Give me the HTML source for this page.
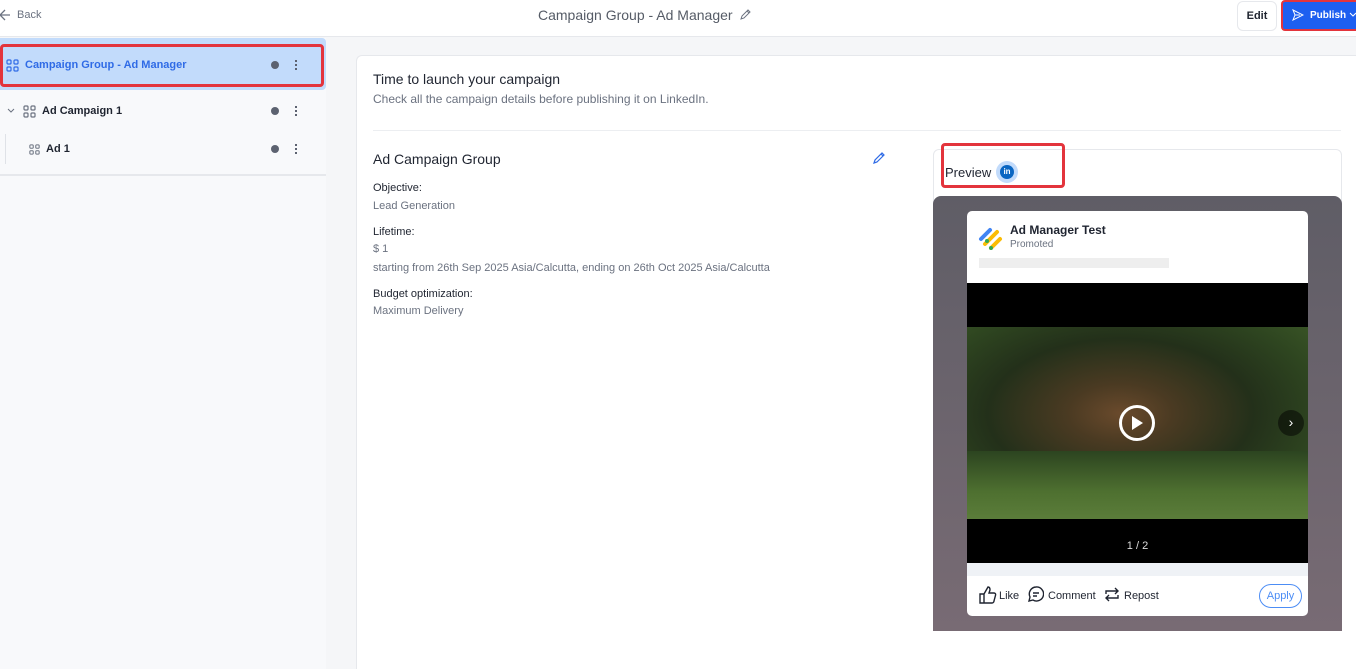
<!DOCTYPE html>
<html><head><meta charset="utf-8"><style>
*{box-sizing:border-box;margin:0;padding:0}
body{width:1356px;height:669px;overflow:hidden;font-family:"Liberation Sans",sans-serif;background:#f5f6f8;position:relative;color:#1f2430}
.a{position:absolute}
.hdr{left:0;top:0;width:1356px;height:37px;background:#fff;border-bottom:1px solid #e6e8ec}
.side{left:0;top:38px;width:326px;height:631px;background:#f8f9fb}
.row{position:absolute;left:0;width:326px;height:38px;font-size:11px;font-weight:bold;display:flex;align-items:center}
.dot{position:absolute;left:271px;width:8px;height:8px;border-radius:50%;background:#5c6270}
.kb{position:absolute;left:295px;width:2px;height:2px;background:#5c6270;box-shadow:0 -4px #5c6270,0 4px #5c6270}
.card{left:356px;top:55px;width:1000px;height:614px;background:#fff;border-left:1px solid #e6e8ec;border-top:1px solid #e6e8ec;border-radius:6px 0 0 0}
.lbl{font-size:11px;color:#1f2430}
.val{font-size:11px;color:#6b7280}
</style></head><body>
<div class="a hdr"></div>
<svg class="a" style="left:0;top:8px" width="12" height="14" viewBox="0 0 12 14"><path d="M10 7H1M5 2L0 7l5 5" stroke="#6b7280" stroke-width="1.3" fill="none"/></svg>
<div class="a" style="left:17px;top:9px;font-size:11px;color:#6b7280">Back</div>
<div class="a" style="left:538px;top:7px;font-size:14px;color:#555b66">Campaign Group - Ad Manager</div>
<svg class="a" style="left:739px;top:9px" width="12" height="12" viewBox="0 0 12 12"><path d="M2 10l1-3 6-6 2 2-6 6zM8 2l2 2" stroke="#6b7280" fill="none"/></svg>
<div class="a" style="left:1237px;top:1px;width:40px;height:30px;border:1px solid #e6e8ec;border-radius:6px;background:#fff;font-size:11px;text-align:center;line-height:28px;font-weight:bold;color:#1f2430">Edit</div>
<div class="a" style="left:1281px;top:0;width:80px;height:31px;background:#1d5ff0;border:2px solid #e3343c;border-radius:4px;color:#fff;font-size:10px;font-weight:bold;line-height:27px;padding-left:27px">Publish</div>
<svg class="a" style="left:1292px;top:9px" width="12" height="12" viewBox="0 0 12 12"><path d="M1 1l10 5-10 5 2-5zM3 6h5" stroke="#fff" fill="none"/></svg>
<svg class="a" style="left:1349px;top:12px" width="8" height="6"><path d="M1 1l3 3 3-3" stroke="#fff" fill="none"/></svg>
<div class="a side"></div>
<div class="a" style="left:0;top:38px;width:326px;height:52px;background:#c2dbfb;border-radius:0 4px 4px 0"></div>
<div class="a" style="left:0;top:44px;width:324px;height:43px;border:3px solid #e3343c;border-radius:4px"></div>
<div class="row" style="top:46px;color:#2f6be6">
<svg style="margin-left:6px" width="13" height="13" viewBox="0 0 13 13" fill="none" stroke="#2f6be6" stroke-width="1.2"><rect x="1" y="1" width="4" height="4" rx="1"/><rect x="8" y="1" width="4" height="4" rx="1"/><rect x="1" y="8" width="4" height="4" rx="1"/><rect x="8" y="8" width="4" height="4" rx="1"/></svg>
<span style="margin-left:6px">Campaign Group - Ad Manager</span><div class="dot"></div><div class="kb"></div></div>
<div class="row" style="top:92px;color:#1f2430">
<svg style="margin-left:7px" width="8" height="6"><path d="M1 1l3 3 3-3" stroke="#6b7280" fill="none"/></svg>
<svg style="margin-left:8px" width="13" height="13" viewBox="0 0 13 13" fill="none" stroke="#6b7280" stroke-width="1.2"><rect x="1" y="1" width="4" height="4" rx="1"/><rect x="8" y="1" width="4" height="4" rx="1"/><rect x="1" y="8" width="4" height="4" rx="1"/><rect x="8" y="8" width="4" height="4" rx="1"/></svg>
<span style="margin-left:6px">Ad Campaign 1</span><div class="dot"></div><div class="kb"></div></div>
<div class="a" style="left:5px;top:134px;width:1px;height:30px;background:#dfe2e7"></div>
<div class="row" style="top:130px">
<svg style="margin-left:29px" width="11" height="11" viewBox="0 0 13 13" fill="none" stroke="#6b7280" stroke-width="1.2"><rect x="1" y="1" width="4" height="4" rx="1"/><rect x="8" y="1" width="4" height="4" rx="1"/><rect x="1" y="8" width="4" height="4" rx="1"/><rect x="8" y="8" width="4" height="4" rx="1"/></svg>
<span style="margin-left:6px">Ad 1</span><div class="dot"></div><div class="kb"></div></div>
<div class="a" style="left:0;top:174px;width:326px;height:2px;background:#e6e8ec"></div>

<div class="a card"></div>
<div class="a" style="left:373px;top:71px;font-size:14px;color:#1f2430">Time to launch your campaign</div>
<div class="a" style="left:373px;top:92px;font-size:12px;color:#6b7280">Check all the campaign details before publishing it on LinkedIn.</div>
<div class="a" style="left:373px;top:130px;width:968px;height:1px;background:#eceef1"></div>
<div class="a" style="left:373px;top:151px;font-size:14px">Ad Campaign Group</div>
<svg class="a" style="left:872px;top:151px" width="14" height="14" viewBox="0 0 14 14"><path d="M2 12l1-3 7-7 2 2-7 7zM9 3l2 2" stroke="#2f6be6" stroke-width="1.2" fill="none"/></svg>
<div class="a lbl" style="left:373px;top:182px">Objective:</div>
<div class="a val" style="left:373px;top:200px">Lead Generation</div>
<div class="a lbl" style="left:373px;top:226px">Lifetime:</div>
<div class="a val" style="left:373px;top:243px">$ 1</div>
<div class="a val" style="left:373px;top:262px">starting from 26th Sep 2025 Asia/Calcutta, ending on 26th Oct 2025 Asia/Calcutta</div>
<div class="a lbl" style="left:373px;top:288px">Budget optimization:</div>
<div class="a val" style="left:373px;top:305px">Maximum Delivery</div>

<div class="a" style="left:933px;top:149px;width:409px;height:482px;border:1px solid #e6e8ec;border-radius:6px;background:#fff"></div>
<div class="a" style="left:941px;top:143px;width:124px;height:45px;border:3px solid #e3343c;border-radius:4px"></div>
<div class="a" style="left:945px;top:165px;font-size:13px">Preview</div>
<div class="a" style="left:996px;top:161px;width:22px;height:22px;border-radius:50%;background:#c2dbfb"></div>
<div class="a" style="left:1000px;top:165px;width:14px;height:14px;border-radius:50%;background:#0a66c2;color:#fff;font-size:8px;font-weight:bold;text-align:center;line-height:14px">in</div>
<div class="a" style="left:933px;top:196px;width:409px;height:435px;border-radius:8px 8px 0 0;background:linear-gradient(#5f5d66,#786b74)"></div>
<div class="a" style="left:967px;top:211px;width:341px;height:405px;background:#fff;border-radius:5px;overflow:hidden">
 <svg class="a" style="left:11px;top:13px" width="26" height="26" viewBox="0 0 26 26"><path d="M3 15l9-9" stroke="#4285f4" stroke-width="4" stroke-linecap="round"/><path d="M7 20l12-12" stroke="#fbbc04" stroke-width="4" stroke-linecap="round"/><path d="M13 24l9-9" stroke="#fbbc04" stroke-width="4" stroke-linecap="round"/><circle cx="9" cy="17" r="2" fill="#34a853"/><circle cx="13" cy="24" r="2" fill="#34a853"/></svg>
 <div class="a" style="left:43px;top:12px;font-size:12px;font-weight:bold;color:#1f2430">Ad Manager Test</div>
 <div class="a" style="left:43px;top:28px;font-size:10px;color:#6b7280">Promoted</div>
 <div class="a" style="left:12px;top:47px;width:190px;height:10px;background:#eee"></div>
 <div class="a" style="left:0;top:72px;width:341px;height:280px;background:#000"></div>
 <div class="a" style="left:0;top:116px;width:341px;height:192px;background:radial-gradient(ellipse at 45% 45%,#6a4a2c 0%,#4a3a22 20%,#23301a 50%,#2e4520 75%,#3d5a28 100%)"></div>
 <div class="a" style="left:0;top:240px;width:341px;height:68px;background:linear-gradient(#2c4420,#4e7030 60%,#5b7d3a)"></div>
 <div class="a" style="left:152px;top:194px;width:36px;height:36px;border:3px solid #fff;border-radius:50%"></div>
 <svg class="a" style="left:164px;top:204px" width="14" height="16"><path d="M1 1l11 7-11 7z" fill="#fff"/></svg>
 <div class="a" style="left:311px;top:199px;width:26px;height:26px;border-radius:50%;background:rgba(0,0,0,.5);color:#fff;font-size:14px;text-align:center;line-height:24px">›</div>
 <div class="a" style="left:0;top:329px;width:341px;text-align:center;color:#ddd;font-size:11px">1 / 2</div>
 <div class="a" style="left:0;top:352px;width:341px;height:13px;background:#eff2f6"></div>
 <svg class="a" style="left:12px;top:375px" width="18" height="18" viewBox="0 0 18 18" fill="none" stroke="#1f2430" stroke-width="1.4"><path d="M5 8v9H1V8zM5 8l4-7c2 0 2 2 2 3l-1 3h5c1 0 2 1 1.6 2l-1.6 6c0 1-1 2-2 2H5"/></svg>
 <div class="a" style="left:32px;top:379px;font-size:11px">Like</div>
 <svg class="a" style="left:61px;top:375px" width="16" height="16" viewBox="0 0 16 16" fill="none" stroke="#1f2430" stroke-width="1.4"><path d="M8 1a7 7 0 1 1-3 13l-4 1 1-4A7 7 0 0 1 8 1zM5 7h6M5 10h4"/></svg>
 <div class="a" style="left:81px;top:379px;font-size:11px">Comment</div>
 <svg class="a" style="left:137px;top:376px" width="16" height="15" viewBox="0 0 16 15" fill="none" stroke="#1f2430" stroke-width="1.4"><path d="M2 7V4h12M11 1l3 3-3 3M14 8v3H2M5 14l-3-3 3-3"/></svg>
 <div class="a" style="left:157px;top:379px;font-size:11px">Repost</div>
 <div class="a" style="left:292px;top:373px;width:43px;height:24px;border:1.5px solid #4c8df5;border-radius:12px;color:#4c8df5;font-size:11px;text-align:center;line-height:22px">Apply</div>
</div>
</body></html>
